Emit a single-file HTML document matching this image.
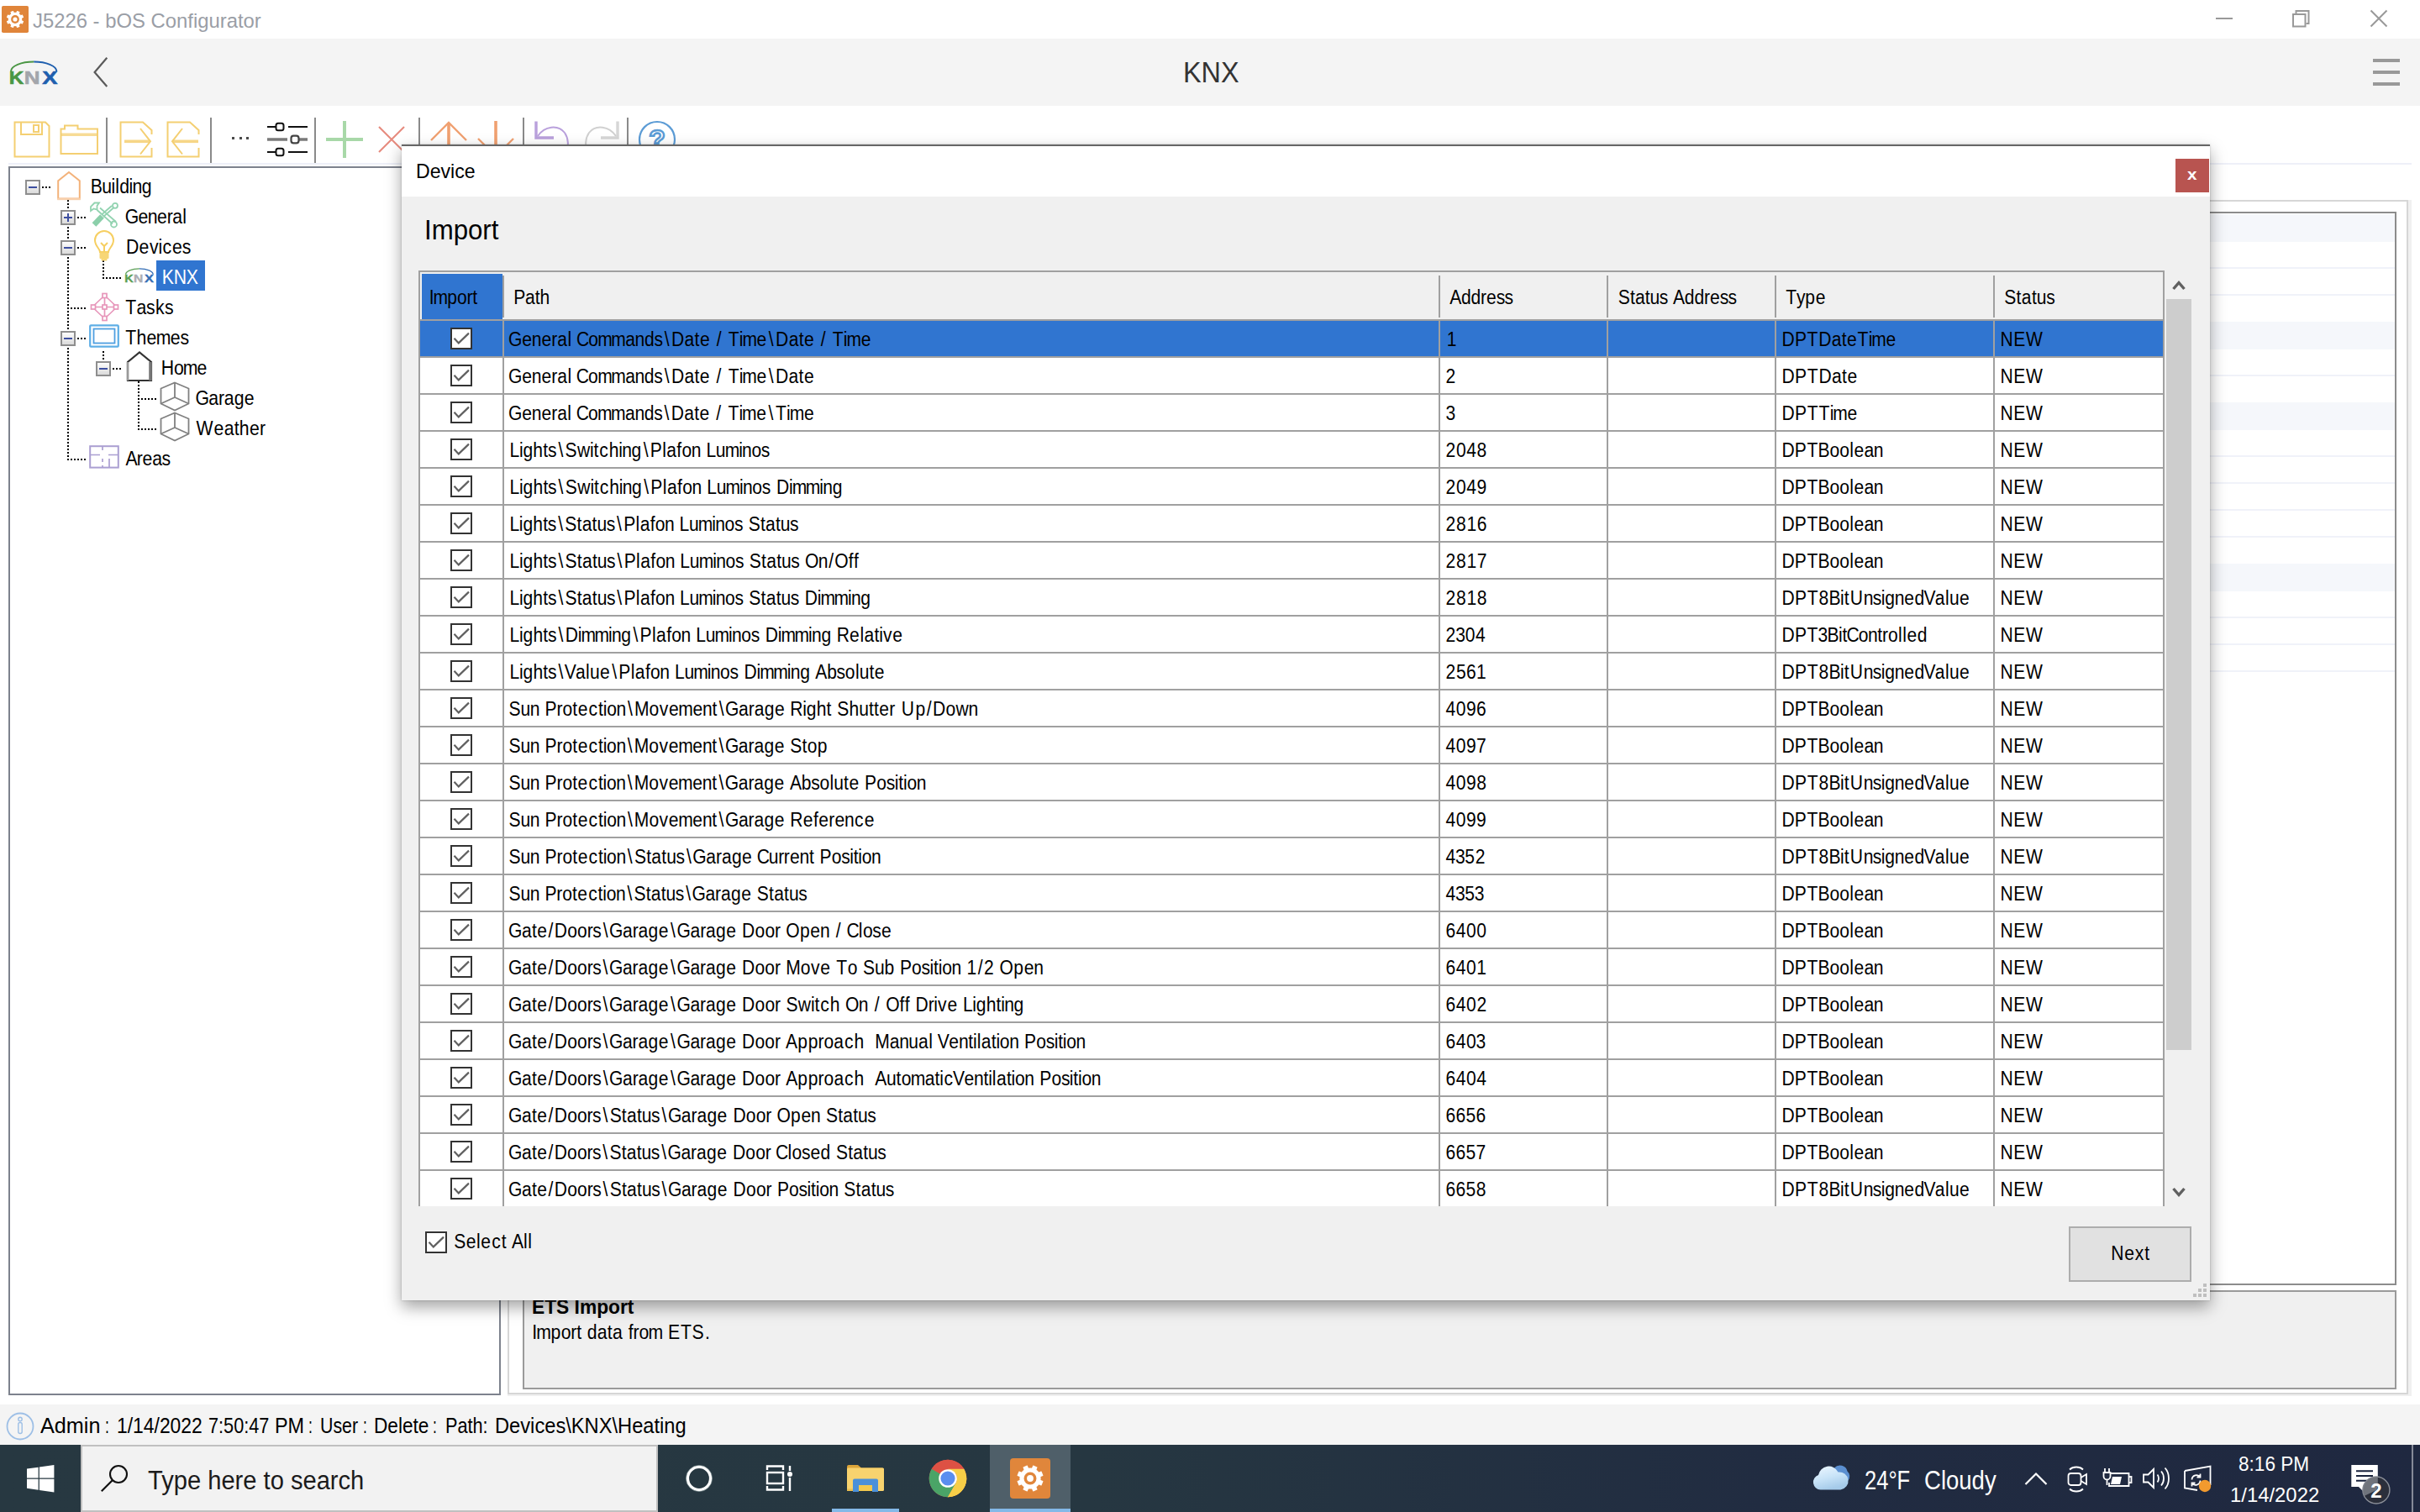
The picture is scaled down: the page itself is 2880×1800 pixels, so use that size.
<!DOCTYPE html>
<html lang="en"><head><meta charset="utf-8"><title>J5226 - bOS Configurator</title><style>
html,body{margin:0;padding:0;}
body{width:2880px;height:1800px;overflow:hidden;background:#fff;position:relative;font-family:"Liberation Sans",sans-serif;}
div,svg,span{position:absolute;}
svg{overflow:visible;}
.t{white-space:pre;transform-origin:0 0;}
.g text{white-space:pre;font-family:"Liberation Sans",sans-serif;}
.hd{height:2px;background:repeating-linear-gradient(90deg,#000 0,#000 2px,transparent 2px,transparent 4px);}
.vd{width:2px;background:repeating-linear-gradient(180deg,#000 0,#000 2px,transparent 2px,transparent 4px);}
.gl{background:repeating-linear-gradient(180deg,#a0a0a0 0,#a0a0a0 2px,transparent 2px,transparent 44px);}
</style></head><body>
<div style="left:0px;top:0px;width:2880px;height:46px;background:#fff;"></div>
<svg style="left:2px;top:7px;" width="32" height="32" viewBox="0 0 32 32"><rect x="0" y="0" width="32" height="32" rx="1.800" fill="#e0853a"/><rect x="14.10" y="5.74" width="3.80" height="4.75" rx="0.5" fill="#fff" transform="rotate(22.5 16 16)"/><rect x="14.10" y="5.74" width="3.80" height="4.75" rx="0.5" fill="#fff" transform="rotate(67.5 16 16)"/><rect x="14.10" y="5.74" width="3.80" height="4.75" rx="0.5" fill="#fff" transform="rotate(112.5 16 16)"/><rect x="14.10" y="5.74" width="3.80" height="4.75" rx="0.5" fill="#fff" transform="rotate(157.5 16 16)"/><rect x="14.10" y="5.74" width="3.80" height="4.75" rx="0.5" fill="#fff" transform="rotate(202.5 16 16)"/><rect x="14.10" y="5.74" width="3.80" height="4.75" rx="0.5" fill="#fff" transform="rotate(247.5 16 16)"/><rect x="14.10" y="5.74" width="3.80" height="4.75" rx="0.5" fill="#fff" transform="rotate(292.5 16 16)"/><rect x="14.10" y="5.74" width="3.80" height="4.75" rx="0.5" fill="#fff" transform="rotate(337.5 16 16)"/><circle cx="16" cy="16" r="8.27" fill="#fff"/><circle cx="16" cy="16" r="4.89" fill="#e0863b"/><circle cx="16" cy="16" r="2.57" fill="#fff"/></svg>
<span class="t" style="left:39.20px;top:12.76px;font-size:24.5px;line-height:24.5px;color:#9a9ea6;transform:scaleX(0.9736);">J5226 - bOS Configurator</span>
<div style="left:2637px;top:21px;width:20px;height:2px;background:#999;"></div>
<svg style="left:2726px;top:10px;" width="24" height="24" viewBox="0 0 24 24"><path d="M6.500 6.500V3h15v15h-3" fill="none" stroke="#999" stroke-width="2"/><rect x="3" y="7" width="14.500" height="14.500" fill="none" stroke="#999" stroke-width="2"/></svg>
<svg style="left:2819px;top:10px;" width="24" height="24" viewBox="0 0 24 24"><path d="M2.5 2.5L21.5 21.5M21.5 2.5L2.5 21.5" stroke="#999" stroke-width="2" fill="none"/></svg>
<div style="left:0px;top:46px;width:2880px;height:80px;background:#f4f4f4;"></div>
<svg style="left:12px;top:72px;" width="56.2" height="28" viewBox="0 0 56.200 28"><path d="M1 13A27.200 11.500 0 0 1 28.200 1.500" fill="none" stroke="#4a9644" stroke-width="2"/><path d="M28.200 1.500A27.200 11.500 0 0 1 55.400 13" fill="none" stroke="#1f5fae" stroke-width="2"/><text x="-1.200" y="27.900" font-family="Liberation Sans, sans-serif" font-weight="bold" font-size="21.800" lengthAdjust="spacingAndGlyphs" fill="#4a9644" stroke="#4a9644" stroke-width=".6" textLength="17.600">K</text><text x="16.800" y="27.900" font-family="Liberation Sans, sans-serif" font-weight="bold" font-size="21.800" lengthAdjust="spacingAndGlyphs" fill="#a3a5ab" stroke="#a3a5ab" stroke-width=".6" textLength="18.800">N</text><text x="38.200" y="27.900" font-family="Liberation Sans, sans-serif" font-weight="bold" font-size="21.800" lengthAdjust="spacingAndGlyphs" fill="#1f5fae" stroke="#1f5fae" stroke-width=".6" textLength="18.200">X</text></svg>
<svg style="left:108px;top:64px;" width="28" height="44" viewBox="0 0 28 44"><path d="M19.300 4.800L4.600 22L19.300 39" fill="none" stroke="#5a5a5a" stroke-width="2.200"/></svg>
<span class="t" style="left:1407.60px;top:68.37px;font-size:35px;line-height:35px;color:#333;transform:scaleX(0.9255);">KNX</span>
<div style="left:2824px;top:70px;width:32px;height:4px;background:#999;"></div>
<div style="left:2824px;top:84px;width:32px;height:4px;background:#999;"></div>
<div style="left:2824px;top:98px;width:32px;height:4px;background:#999;"></div>
<div style="left:0px;top:126px;width:2880px;height:72px;background:#fff;"></div>
<div style="left:10px;top:194px;width:2860px;height:2px;background:#eef0f8;"></div>
<svg style="left:14px;top:142px;" width="48" height="48" viewBox="0 0 48 48"><path d="M3.5 3.5H40L44.5 8V44.5H3.5Z" fill="none" stroke="#f4cf72" stroke-width="2"/><path d="M11 3.5V18H36V3.5" fill="none" stroke="#f4cf72" stroke-width="2"/><rect x="26" y="7" width="6" height="8" fill="none" stroke="#f4cf72" stroke-width="2"/></svg>
<svg style="left:68px;top:142px;" width="52" height="48" viewBox="0 0 52 48"><path d="M4.500 41V11.500H9V7.500H24.500V11.500H48V41Z" fill="none" stroke="#f4cf72" stroke-width="2"/><path d="M4.500 18.200H48" fill="none" stroke="#f4cf72" stroke-width="3.600" opacity=".75"/></svg>
<div style="left:126px;top:140px;width:2px;height:54px;background:#8a8a8a;"></div>
<svg style="left:140px;top:142px;" width="44" height="48" viewBox="0 0 44 48"><path d="M40.500 34V44.500H3.500V3.500H30L40.500 13V18" fill="none" stroke="#f4cf72" stroke-width="2"/><path d="M8 26.300H38" stroke="#f4cf72" stroke-width="3.600" fill="none" opacity=".85"/><path d="M27 11L39 26.300L27 41.500" stroke="#f4cf72" stroke-width="2" fill="none"/></svg>
<svg style="left:196px;top:142px;" width="44" height="48" viewBox="0 0 44 48"><path d="M40.500 34V44.500H3.500V3.500H30L40.500 13V18" fill="none" stroke="#f4cf72" stroke-width="2"/><path d="M9 26.300H40" stroke="#f4cf72" stroke-width="3.600" fill="none" opacity=".85"/><path d="M21 11L9 26.300L21 41.500" stroke="#f4cf72" stroke-width="2" fill="none"/></svg>
<div style="left:250px;top:140px;width:2px;height:54px;background:#8a8a8a;"></div>
<div style="left:276.2px;top:163px;width:3px;height:3px;background:#4a4a4a;"></div>
<div style="left:284.8px;top:163px;width:3px;height:3px;background:#4a4a4a;"></div>
<div style="left:293.4px;top:163px;width:3px;height:3px;background:#4a4a4a;"></div>
<svg style="left:316px;top:144px;" width="52" height="44" viewBox="0 0 52 44"><g stroke="#111" stroke-width="2" fill="#fff"><path d="M2 7H12M27 7H50M2 37H12M27 37H50"/><rect x="12.500" y="2.800" width="9" height="8.400" rx="2.500"/><rect x="12.500" y="32.800" width="9" height="8.400" rx="2.500"/></g><g stroke="#7a7a7a" fill="#fff"><path d="M2 22H26M39 22H50" stroke-width="3.600"/><rect x="30.500" y="17.600" width="9" height="8.800" rx="2.800" stroke="#444" stroke-width="2.200"/></g></svg>
<div style="left:374px;top:140px;width:2px;height:54px;background:#8a8a8a;"></div>
<div style="left:388px;top:164px;width:44px;height:4px;background:#a8d8a8;"></div>
<div style="left:408px;top:144px;width:4px;height:44px;background:#a8d8a8;"></div>
<svg style="left:448px;top:148px;" width="36" height="36" viewBox="0 0 36 36"><path d="M3 3L33 33M33 3L3 33" stroke="#e68b7e" stroke-width="2.100" fill="none"/></svg>
<div style="left:498px;top:140px;width:2px;height:54px;background:#8a8a8a;"></div>
<svg style="left:510px;top:142px;" width="48" height="48" viewBox="0 0 48 48"><path d="M24 4V46" stroke="#f0a070" stroke-width="3.6" fill="none"/><path d="M3 25L24 4L45 25" stroke="#f0a070" stroke-width="2.4" fill="none"/></svg>
<svg style="left:566px;top:142px;" width="48" height="48" viewBox="0 0 48 48"><path d="M24 2V44" stroke="#f0a070" stroke-width="3.6" fill="none"/><path d="M3 23L24 44L45 23" stroke="#f0a070" stroke-width="2.4" fill="none"/></svg>
<div style="left:622px;top:140px;width:2px;height:54px;background:#8a8a8a;"></div>
<svg style="left:634px;top:142px;" width="48" height="48" viewBox="0 0 48 48"><path d="M4 2.500V22H25" stroke="#b9a0dc" stroke-width="3.400" fill="none"/><path d="M6 20C14 8 30 6 38 16C43 23 43 32 40 44" stroke="#b9a0dc" stroke-width="2" fill="none"/></svg>
<svg style="left:692px;top:142px;" width="48" height="48" viewBox="0 0 48 48"><path d="M43 2.500V22H23" stroke="#d6d6d6" stroke-width="3.400" fill="none"/><path d="M41 20C33 8 17 6 9 16C4 23 4 32 7 44" stroke="#d0d0d0" stroke-width="2" fill="none"/></svg>
<div style="left:746px;top:140px;width:2px;height:54px;background:#8a8a8a;"></div>
<svg style="left:758px;top:142px;" width="48" height="48" viewBox="0 0 48 48"><circle cx="24" cy="24" r="21" fill="none" stroke="#5b9bd5" stroke-width="2.2"/><text x="24" y="35" text-anchor="middle" font-family="Liberation Sans, sans-serif" font-weight="bold" font-size="32" fill="none" stroke="#5b9bd5" stroke-width="2.400">?</text></svg>
<div style="left:10px;top:198px;width:586px;height:1463px;background:#fff;border:2px solid #7d828d;box-sizing:border-box;"></div>
<div class="vd" style="left:80px;top:238px;height:310px"></div>
<div class="hd" style="left:50px;top:222px;width:12px"></div>
<div class="hd" style="left:92px;top:258px;width:10px"></div>
<div class="hd" style="left:92px;top:294px;width:10px"></div>
<div class="hd" style="left:92px;top:402px;width:10px"></div>
<div class="hd" style="left:80px;top:366px;width:22px"></div>
<div class="hd" style="left:80px;top:546px;width:22px"></div>
<div class="vd" style="left:122px;top:310px;height:22px"></div>
<div class="hd" style="left:122px;top:330px;width:22px"></div>
<div class="vd" style="left:122px;top:418px;height:12px"></div>
<div class="hd" style="left:134px;top:438px;width:10px"></div>
<div class="vd" style="left:164px;top:454px;height:58px"></div>
<div class="hd" style="left:164px;top:474px;width:22px"></div>
<div class="hd" style="left:164px;top:510px;width:22px"></div>
<svg style="left:30px;top:214px;" width="18" height="18" viewBox="0 0 18 18"><defs><linearGradient id="eg" x1="0" y1="0" x2="0" y2="1"><stop offset="0" stop-color="#fff"/><stop offset="1" stop-color="#d8d8d8"/></linearGradient></defs><rect x="1" y="1" width="16" height="16" fill="url(#eg)" stroke="#8e8e8e" stroke-width="2"/><rect x="4" y="8" width="10" height="2" fill="#3d4fa0"/></svg>
<svg style="left:72px;top:250px;" width="18" height="18" viewBox="0 0 18 18"><rect x="1" y="1" width="16" height="16" fill="url(#eg)" stroke="#8e8e8e" stroke-width="2"/><rect x="4" y="8" width="10" height="2" fill="#3d4fa0"/><rect x="8" y="4" width="2" height="10" fill="#3d4fa0"/></svg>
<svg style="left:72px;top:286px;" width="18" height="18" viewBox="0 0 18 18"><rect x="1" y="1" width="16" height="16" fill="url(#eg)" stroke="#8e8e8e" stroke-width="2"/><rect x="4" y="8" width="10" height="2" fill="#3d4fa0"/></svg>
<svg style="left:72px;top:394px;" width="18" height="18" viewBox="0 0 18 18"><rect x="1" y="1" width="16" height="16" fill="url(#eg)" stroke="#8e8e8e" stroke-width="2"/><rect x="4" y="8" width="10" height="2" fill="#3d4fa0"/></svg>
<svg style="left:114px;top:430px;" width="18" height="18" viewBox="0 0 18 18"><rect x="1" y="1" width="16" height="16" fill="url(#eg)" stroke="#8e8e8e" stroke-width="2"/><rect x="4" y="8" width="10" height="2" fill="#3d4fa0"/></svg>
<svg style="left:66px;top:202px;" width="32" height="38" viewBox="0 0 32 38"><path d="M3.200 34.500V13.300L16 3L28.800 13.300V34.500Z" fill="none" stroke="#f3b27a" stroke-width="2"/><path d="M2.200 35H29.800" stroke="#f8d0ac" stroke-width="2.400"/></svg>
<svg style="left:106px;top:240px;" width="36" height="32" viewBox="0 0 36 32"><g stroke="#74c79b" fill="none" stroke-width="1.800" opacity=".78"><path d="M6.500 1.500H12L9.500 5V9.500L5.500 8.500L2 11V6Z"/><path d="M9.500 10L28 26.500M13 7.500L32 24"/><circle cx="29.500" cy="27" r="3.500"/><circle cx="31" cy="4.800" r="3"/><path d="M29 7.500L17 18M27 5L15.500 15"/><path d="M15.500 17.500L6 27.500" stroke-width="6.500" stroke="#6bc293"/></g></svg>
<svg style="left:110px;top:274px;" width="28" height="40" viewBox="0 0 28 40"><g fill="none" stroke="#f6cf62" stroke-width="2"><path d="M9 26C9 22 3 19 3 12A11 11 0 0 1 25 12C25 19 19 22 19 26Z"/><path d="M10 15L14 19L18 15M14 19V26"/></g><rect x="8.500" y="26.500" width="11" height="7.500" rx="1" fill="#f7d676"/><rect x="10.500" y="33.500" width="7" height="3" rx="1.200" fill="#f7d676"/></svg>
<svg style="left:148.5px;top:319.2px;opacity:0.9;" width="33.7" height="16.8" viewBox="0 0 56.200 28"><path d="M1 13A27.200 11.500 0 0 1 28.200 1.500" fill="none" stroke="#4a9644" stroke-width="2"/><path d="M28.200 1.500A27.200 11.500 0 0 1 55.400 13" fill="none" stroke="#1f5fae" stroke-width="2"/><text x="-1.200" y="27.900" font-family="Liberation Sans, sans-serif" font-weight="bold" font-size="21.800" lengthAdjust="spacingAndGlyphs" fill="#4a9644" stroke="#4a9644" stroke-width=".6" textLength="17.600">K</text><text x="16.800" y="27.900" font-family="Liberation Sans, sans-serif" font-weight="bold" font-size="21.800" lengthAdjust="spacingAndGlyphs" fill="#a3a5ab" stroke="#a3a5ab" stroke-width=".6" textLength="18.800">N</text><text x="38.200" y="27.900" font-family="Liberation Sans, sans-serif" font-weight="bold" font-size="21.800" lengthAdjust="spacingAndGlyphs" fill="#1f5fae" stroke="#1f5fae" stroke-width=".6" textLength="18.200">X</text></svg>
<svg style="left:107px;top:347.5px;" width="35" height="35" viewBox="0 0 35 35"><g fill="none" stroke="#e796ba" stroke-width="1.700"><rect x="15" y="1.500" width="5" height="5"/><rect x="15" y="28.500" width="5" height="5"/><rect x="1.500" y="15" width="5" height="5"/><rect x="28.500" y="15" width="5" height="5"/><rect x="15" y="15" width="5" height="5"/><path d="M17.500 6.500V15M17.500 20V28.500M6.500 17.500H15M20 17.500H28.500M15 6L5.500 15M20 6L29.500 15M5.500 20L15 29M29.500 20L20 29"/></g></svg>
<svg style="left:106px;top:386px;" width="36" height="28" viewBox="0 0 36 28"><rect x="1.200" y="1.300" width="33.600" height="25.400" fill="none" stroke="#5eaee6" stroke-width="2.200" rx="1"/><rect x="5.500" y="5.500" width="25" height="17" fill="none" stroke="#4f9fe0" stroke-width="1.800"/></svg>
<svg style="left:149px;top:417px;" width="34" height="38" viewBox="0 0 34 38"><path d="M3 36V14L17 2.500L31 14V36Z" fill="none" stroke="#333" stroke-width="2.2"/><path d="M30 14V36" stroke="#777" stroke-width="3.6"/><path d="M3 14V36" stroke="#999" stroke-width="2.5"/></svg>
<svg style="left:189.5px;top:453.5px;" width="36" height="36" viewBox="0 0 36 36"><g fill="none" stroke="#808080" stroke-width="1.8"><path d="M18 1.500L34.500 8.500V26.500L18 34.500L1.500 26.500V8.500Z"/><path d="M18 1.500V19M18 19L1.500 26.500M18 19L34.500 26.500"/></g></svg>
<svg style="left:189.5px;top:489.5px;" width="36" height="36" viewBox="0 0 36 36"><g fill="none" stroke="#808080" stroke-width="1.8"><path d="M18 1.500L34.500 8.500V26.500L18 34.500L1.500 26.500V8.500Z"/><path d="M18 1.500V19M18 19L1.500 26.500M18 19L34.500 26.500"/></g></svg>
<svg style="left:106px;top:530px;" width="36" height="28" viewBox="0 0 36 28"><g fill="none" stroke="#ab9fd2" stroke-width="2"><rect x="1.200" y="1.200" width="33.600" height="25.400"/><path d="M1.200 11.500H13M23 11.500H34.800M16 1.200V6M16 16V20M24 16V26.600M16 24V26.600" stroke-width="1.700"/></g></svg>
<div style="left:186px;top:310px;width:58px;height:36px;background:#3075d0;"></div>
<svg class="g" style="left:105px;top:206.10px" width="79" height="34"><text transform="scale(0.8700,1)" x="3.10 18.83 31.75 37.07 42.73 55.88 60.26 73.22" y="24.4" font-size="24.4" fill="#000" xml:space="preserve">Building</text></svg>
<svg class="g" style="left:146px;top:242.10px" width="80" height="34"><text transform="scale(0.8700,1)" x="3.22 21.33 34.28 47.22 60.57 68.23 81.94" y="24.4" font-size="24.4" fill="#000" xml:space="preserve">General</text></svg>
<svg class="g" style="left:148px;top:278.10px" width="83" height="34"><text transform="scale(0.8700,1)" x="2.30 20.24 34.39 46.50 52.31 65.56 78.95" y="24.4" font-size="24.4" fill="#000" xml:space="preserve">Devices</text></svg>
<svg class="g" style="left:190px;top:314.10px" width="50" height="34"><text transform="scale(0.8700,1)" x="3.22 19.24 36.60" y="24.4" font-size="24.4" fill="#fff" xml:space="preserve">KNX</text></svg>
<svg class="g" style="left:147px;top:350.10px" width="63" height="34"><text transform="scale(0.8700,1)" x="2.53 17.86 30.97 43.70 56.42" y="24.4" font-size="24.4" fill="#000" xml:space="preserve">Tasks</text></svg>
<svg class="g" style="left:147px;top:386.10px" width="82" height="34"><text transform="scale(0.8700,1)" x="2.53 17.85 31.69 44.49 64.06 77.46" y="24.4" font-size="24.4" fill="#000" xml:space="preserve">Themes</text></svg>
<svg class="g" style="left:189px;top:422.10px" width="61" height="34"><text transform="scale(0.8700,1)" x="3.10 20.76 33.04 52.41" y="24.4" font-size="24.4" fill="#000" xml:space="preserve">Home</text></svg>
<svg class="g" style="left:230px;top:458.10px" width="76" height="34"><text transform="scale(0.8700,1)" x="2.87 21.06 34.39 42.27 55.95 69.88" y="24.4" font-size="24.4" fill="#000" xml:space="preserve">Garage</text></svg>
<svg class="g" style="left:231px;top:494.10px" width="89" height="34"><text transform="scale(0.8700,1)" x="2.87 27.12 41.16 54.95 61.91 75.91 89.58" y="24.4" font-size="24.4" fill="#000" xml:space="preserve">Weather</text></svg>
<svg class="g" style="left:147px;top:530.10px" width="60" height="34"><text transform="scale(0.8700,1)" x="2.87 18.12 25.90 39.38 52.17" y="24.4" font-size="24.4" fill="#000" xml:space="preserve">Areas</text></svg>
<div style="left:2866px;top:238px;width:4px;height:1424px;background:#f0f0f0;"></div>
<div style="left:604px;top:1660px;width:2266px;height:2px;background:#f0f0f0;"></div>
<div style="left:604px;top:238px;width:2262px;height:1422px;background:#fff;border:2px solid #d6d6d6;box-sizing:border-box;"></div>
<div style="left:622px;top:252px;width:2230px;height:1278px;background:#fff;border:2px solid #8c8c8c;box-sizing:border-box;"></div>
<div style="left:624px;top:254.5px;width:2226px;height:33px;background:#f5f7fb;"></div>
<div style="left:624px;top:382.5px;width:2226px;height:33px;background:#f5f7fb;"></div>
<div style="left:624px;top:478.5px;width:2226px;height:33px;background:#f5f7fb;"></div>
<div style="left:624px;top:670.5px;width:2226px;height:33px;background:#f5f7fb;"></div>
<div style="left:624px;top:318px;width:2226px;height:2px;background:#f0f2f9;"></div>
<div style="left:624px;top:350px;width:2226px;height:2px;background:#f0f2f9;"></div>
<div style="left:624px;top:446px;width:2226px;height:2px;background:#f0f2f9;"></div>
<div style="left:624px;top:542px;width:2226px;height:2px;background:#f0f2f9;"></div>
<div style="left:624px;top:574px;width:2226px;height:2px;background:#f0f2f9;"></div>
<div style="left:624px;top:606px;width:2226px;height:2px;background:#f0f2f9;"></div>
<div style="left:624px;top:638px;width:2226px;height:2px;background:#f0f2f9;"></div>
<div style="left:624px;top:734px;width:2226px;height:2px;background:#f0f2f9;"></div>
<div style="left:624px;top:766px;width:2226px;height:2px;background:#f0f2f9;"></div>
<div style="left:624px;top:798px;width:2226px;height:2px;background:#f0f2f9;"></div>
<div style="left:622px;top:1536px;width:2230px;height:118px;background:#f0f0f0;border:2px solid #9a9a9a;box-sizing:border-box;"></div>
<span class="t" style="left:632.50px;top:1543.95px;font-size:24.4px;line-height:24.4px;color:#000;font-weight:bold;transform:scaleX(0.9335);">ETS Import</span>
<svg class="g" style="left:631px;top:1569.60px" width="217" height="34"><text transform="scale(0.8700,1)" x="2.53 8.36 28.17 42.15 55.52 63.52 70.80 78.01 91.77 105.61 112.66 126.74 134.10 140.84 148.76 161.48 181.29 188.65 205.70 221.25 238.96" y="24.4" font-size="24.4" fill="#000" xml:space="preserve">Import data from ETS.</text></svg>
<div style="left:478px;top:172px;width:2152px;height:1376px;background:#f0f0f0;box-shadow:0 8px 18px 0 rgba(0,0,0,.36),0 0 2px rgba(0,0,0,.22);"></div>
<div style="left:478px;top:172px;width:2152px;height:62px;background:#fff;"></div>
<div style="left:478px;top:172px;width:2152px;height:2px;background:#666;"></div>
<span class="t" style="left:494.70px;top:192.79px;font-size:23.4px;line-height:23.4px;color:#000;transform:scaleX(0.9883);">Device</span>
<div style="left:2589px;top:189px;width:40px;height:40px;background:#b85450;"></div>
<span class="t" style="left:2603.40px;top:198.22px;font-size:19px;line-height:19px;color:#fff;font-weight:bold;transform:scaleX(1.0886);">x</span>
<span class="t" style="left:505.20px;top:257.97px;font-size:32.4px;line-height:32.4px;color:#000;transform:scaleX(0.9627);">Import</span>
<div style="left:498px;top:322px;width:2078px;height:1114px;background:#fff;"></div>
<div style="left:498px;top:322px;width:2078px;height:58px;background:#f0f0f0;"></div>
<div style="left:502px;top:326px;width:96px;height:54px;background:#3075d0;"></div>
<div style="left:500px;top:382px;width:2074px;height:42px;background:#3075d0;"></div>
<div style="left:498px;top:322px;width:2078px;height:2px;background:#a0a0a0;"></div>
<div class="gl" style="left:500px;top:380px;width:2074px;height:1056px"></div>
<div style="left:498px;top:322px;width:2px;height:1114px;background:#a0a0a0;"></div>
<div style="left:2574px;top:322px;width:2px;height:1114px;background:#a0a0a0;"></div>
<div style="left:598px;top:328px;width:2px;height:50px;background:#a0a0a0;"></div>
<div style="left:598px;top:380px;width:2px;height:1056px;background:#a0a0a0;"></div>
<div style="left:1712px;top:328px;width:2px;height:50px;background:#a0a0a0;"></div>
<div style="left:1712px;top:380px;width:2px;height:1056px;background:#a0a0a0;"></div>
<div style="left:1912px;top:328px;width:2px;height:50px;background:#a0a0a0;"></div>
<div style="left:1912px;top:380px;width:2px;height:1056px;background:#a0a0a0;"></div>
<div style="left:2112px;top:328px;width:2px;height:50px;background:#a0a0a0;"></div>
<div style="left:2112px;top:380px;width:2px;height:1056px;background:#a0a0a0;"></div>
<div style="left:2372px;top:328px;width:2px;height:50px;background:#a0a0a0;"></div>
<div style="left:2372px;top:380px;width:2px;height:1056px;background:#a0a0a0;"></div>
<svg class="g" style="left:508px;top:338.40px" width="63" height="33"><text transform="scale(0.8700,1)" x="3.22 8.70 27.94 41.48 54.48 62.24" y="24.2" font-size="24.2" fill="#000" xml:space="preserve">Import</text></svg>
<svg class="g" style="left:609px;top:338.40px" width="49" height="33"><text transform="scale(0.8700,1)" x="2.53 18.49 31.94 38.61" y="24.2" font-size="24.2" fill="#000" xml:space="preserve">Path</text></svg>
<svg class="g" style="left:1723px;top:338.40px" width="81" height="33"><text transform="scale(0.8700,1)" x="2.53 18.31 31.72 44.87 52.95 66.30 77.56" y="24.2" font-size="24.2" fill="#000" xml:space="preserve">Address</text></svg>
<svg class="g" style="left:1923px;top:338.40px" width="148" height="33"><text transform="scale(0.8700,1)" x="3.22 19.46 26.36 39.99 46.58 59.40 71.43 78.18 94.00 107.45 120.63 128.74 142.12 153.42" y="24.2" font-size="24.2" fill="#000" xml:space="preserve">Status Address</text></svg>
<svg class="g" style="left:2123px;top:338.40px" width="53" height="33"><text transform="scale(0.8700,1)" x="2.53 17.27 29.13 43.33" y="24.2" font-size="24.2" fill="#000" xml:space="preserve">Type</text></svg>
<svg class="g" style="left:2383px;top:338.40px" width="66" height="33"><text transform="scale(0.8700,1)" x="2.53 19.06 26.22 40.11 46.95 60.08" y="24.2" font-size="24.2" fill="#000" xml:space="preserve">Status</text></svg>
<svg style="left:536px;top:390px;" width="26" height="26" viewBox="0 0 26 26"><rect x="1" y="1" width="24" height="24" fill="#fff" stroke="#333" stroke-width="2"/><path d="M4.500 12.800L9.800 18.400L22 6.600" fill="none" stroke="#606060" stroke-width="2.2"/></svg>
<svg class="g" style="left:603px;top:388.10px" width="437" height="33"><text transform="scale(0.8700,1)" x="2.41 20.97 34.31 47.65 61.30 69.29 83.26 89.36 95.29 111.67 124.35 142.81 162.29 175.38 188.38 201.59 215.86 225.33 243.21 256.98 264.26 278.53 286.98 295.42 303.13 318.17 322.36 342.09 358.48 367.95 385.82 399.59 406.87 421.14 429.59 438.04 445.74 460.78 464.97 484.71" y="24.2" font-size="24.2" fill="#000" xml:space="preserve">General Commands\Date / Time\Date / Time</text></svg>
<svg class="g" style="left:1719px;top:388.10px" width="18" height="33"><text transform="scale(0.8700,1)" x="3.22" y="24.2" font-size="24.2" fill="#000" xml:space="preserve">1</text></svg>
<svg class="g" style="left:2118px;top:388.10px" width="142" height="33"><text transform="scale(0.8700,1)" x="2.87 20.68 37.50 53.10 70.97 84.72 92.00 106.46 121.49 125.68 145.40" y="24.2" font-size="24.2" fill="#000" xml:space="preserve">DPTDateTime</text></svg>
<svg class="g" style="left:2378px;top:388.10px" width="56" height="33"><text transform="scale(0.8700,1)" x="2.87 20.93 37.96" y="24.2" font-size="24.2" fill="#000" xml:space="preserve">NEW</text></svg>
<svg style="left:536px;top:434px;" width="26" height="26" viewBox="0 0 26 26"><rect x="1" y="1" width="24" height="24" fill="#fff" stroke="#333" stroke-width="2"/><path d="M4.500 12.800L9.800 18.400L22 6.600" fill="none" stroke="#606060" stroke-width="2.2"/></svg>
<svg class="g" style="left:603px;top:432.10px" width="369" height="33"><text transform="scale(0.8700,1)" x="2.41 20.96 34.30 47.64 61.28 69.28 83.24 89.34 95.27 111.64 124.32 142.78 162.25 175.33 188.33 201.54 215.81 225.28 243.15 256.91 264.19 278.46 286.91 295.35 303.05 318.09 322.28 342.01 358.39 367.86 385.73 399.49 406.77" y="24.2" font-size="24.2" fill="#000" xml:space="preserve">General Commands\Date / Time\Date</text></svg>
<svg class="g" style="left:1718px;top:432.10px" width="18" height="33"><text transform="scale(0.8700,1)" x="2.99" y="24.2" font-size="24.2" fill="#000" xml:space="preserve">2</text></svg>
<svg class="g" style="left:2118px;top:432.10px" width="96" height="33"><text transform="scale(0.8700,1)" x="2.87 20.78 37.70 53.40 71.36 85.18 92.52" y="24.2" font-size="24.2" fill="#000" xml:space="preserve">DPTDate</text></svg>
<svg class="g" style="left:2378px;top:432.10px" width="56" height="33"><text transform="scale(0.8700,1)" x="2.87 20.93 37.96" y="24.2" font-size="24.2" fill="#000" xml:space="preserve">NEW</text></svg>
<svg style="left:536px;top:478px;" width="26" height="26" viewBox="0 0 26 26"><rect x="1" y="1" width="24" height="24" fill="#fff" stroke="#333" stroke-width="2"/><path d="M4.500 12.800L9.800 18.400L22 6.600" fill="none" stroke="#606060" stroke-width="2.2"/></svg>
<svg class="g" style="left:603px;top:476.10px" width="369" height="33"><text transform="scale(0.8700,1)" x="2.41 20.95 34.27 47.60 61.23 69.21 83.16 89.26 95.18 111.54 124.20 142.64 162.10 175.17 188.15 201.35 215.61 225.06 242.92 256.67 263.94 278.19 286.63 295.07 302.76 317.79 321.97 341.68 358.05 367.86 382.89 387.06 406.77" y="24.2" font-size="24.2" fill="#000" xml:space="preserve">General Commands\Date / Time\Time</text></svg>
<svg class="g" style="left:1718px;top:476.10px" width="18" height="33"><text transform="scale(0.8700,1)" x="2.99" y="24.2" font-size="24.2" fill="#000" xml:space="preserve">3</text></svg>
<svg class="g" style="left:2118px;top:476.10px" width="96" height="33"><text transform="scale(0.8700,1)" x="2.87 20.70 37.55 53.53 68.58 72.78 92.52" y="24.2" font-size="24.2" fill="#000" xml:space="preserve">DPTTime</text></svg>
<svg class="g" style="left:2378px;top:476.10px" width="56" height="33"><text transform="scale(0.8700,1)" x="2.87 20.93 37.96" y="24.2" font-size="24.2" fill="#000" xml:space="preserve">NEW</text></svg>
<svg style="left:536px;top:522px;" width="26" height="26" viewBox="0 0 26 26"><rect x="1" y="1" width="24" height="24" fill="#fff" stroke="#333" stroke-width="2"/><path d="M4.500 12.800L9.800 18.400L22 6.600" fill="none" stroke="#606060" stroke-width="2.2"/></svg>
<svg class="g" style="left:604px;top:520.10px" width="316" height="33"><text transform="scale(0.8700,1)" x="2.99 15.98 21.18 34.92 48.64 55.16 69.43 78.77 95.33 112.78 117.96 125.73 138.87 152.11 156.60 169.68 185.81 195.14 211.72 217.60 231.44 238.45 251.43 264.73 271.71 284.88 297.34 316.31 320.80 333.79 346.98" y="24.2" font-size="24.2" fill="#000" xml:space="preserve">Lights\Switching\Plafon Luminos</text></svg>
<svg class="g" style="left:1718px;top:520.10px" width="55" height="33"><text transform="scale(0.8700,1)" x="2.99 17.27 31.36 45.55" y="24.2" font-size="24.2" fill="#000" xml:space="preserve">2048</text></svg>
<svg class="g" style="left:2118px;top:520.10px" width="127" height="33"><text transform="scale(0.8700,1)" x="2.87 20.54 37.24 52.34 68.29 81.78 95.56 101.60 115.53 128.50" y="24.2" font-size="24.2" fill="#000" xml:space="preserve">DPTBoolean</text></svg>
<svg class="g" style="left:2378px;top:520.10px" width="56" height="33"><text transform="scale(0.8700,1)" x="2.87 20.93 37.96" y="24.2" font-size="24.2" fill="#000" xml:space="preserve">NEW</text></svg>
<svg style="left:536px;top:566px;" width="26" height="26" viewBox="0 0 26 26"><rect x="1" y="1" width="24" height="24" fill="#fff" stroke="#333" stroke-width="2"/><path d="M4.500 12.800L9.800 18.400L22 6.600" fill="none" stroke="#606060" stroke-width="2.2"/></svg>
<svg class="g" style="left:604px;top:564.10px" width="402" height="33"><text transform="scale(0.8700,1)" x="2.99 16.01 21.24 35.03 48.78 55.33 69.64 79.02 95.64 113.13 118.33 126.14 139.32 152.59 157.11 170.23 186.40 195.78 212.40 218.31 232.18 239.23 252.25 265.59 272.60 285.81 298.32 317.33 321.85 334.88 348.11 360.30 367.68 385.08 389.31 407.82 426.83 431.35 444.48" y="24.2" font-size="24.2" fill="#000" xml:space="preserve">Lights\Switching\Plafon Luminos Dimming</text></svg>
<svg class="g" style="left:1718px;top:564.10px" width="55" height="33"><text transform="scale(0.8700,1)" x="2.99 17.27 31.36 45.30" y="24.2" font-size="24.2" fill="#000" xml:space="preserve">2049</text></svg>
<svg class="g" style="left:2118px;top:564.10px" width="127" height="33"><text transform="scale(0.8700,1)" x="2.87 20.54 37.24 52.34 68.29 81.78 95.56 101.60 115.53 128.50" y="24.2" font-size="24.2" fill="#000" xml:space="preserve">DPTBoolean</text></svg>
<svg class="g" style="left:2378px;top:564.10px" width="56" height="33"><text transform="scale(0.8700,1)" x="2.87 20.93 37.96" y="24.2" font-size="24.2" fill="#000" xml:space="preserve">NEW</text></svg>
<svg style="left:536px;top:610px;" width="26" height="26" viewBox="0 0 26 26"><rect x="1" y="1" width="24" height="24" fill="#fff" stroke="#333" stroke-width="2"/><path d="M4.500 12.800L9.800 18.400L22 6.600" fill="none" stroke="#606060" stroke-width="2.2"/></svg>
<svg class="g" style="left:604px;top:608.10px" width="350" height="33"><text transform="scale(0.8700,1)" x="2.99 15.95 21.13 34.84 48.53 55.03 69.27 78.57 94.92 101.92 115.65 122.34 135.28 149.52 158.82 175.37 181.22 195.03 202.02 214.97 228.24 235.19 248.33 260.75 279.69 284.16 297.11 310.27 322.40 329.58 345.93 352.93 366.67 373.35 386.29" y="24.2" font-size="24.2" fill="#000" xml:space="preserve">Lights\Status\Plafon Luminos Status</text></svg>
<svg class="g" style="left:1718px;top:608.10px" width="55" height="33"><text transform="scale(0.8700,1)" x="2.99 17.37 31.59 45.58" y="24.2" font-size="24.2" fill="#000" xml:space="preserve">2816</text></svg>
<svg class="g" style="left:2118px;top:608.10px" width="127" height="33"><text transform="scale(0.8700,1)" x="2.87 20.54 37.24 52.34 68.29 81.78 95.56 101.60 115.53 128.50" y="24.2" font-size="24.2" fill="#000" xml:space="preserve">DPTBoolean</text></svg>
<svg class="g" style="left:2378px;top:608.10px" width="56" height="33"><text transform="scale(0.8700,1)" x="2.87 20.93 37.96" y="24.2" font-size="24.2" fill="#000" xml:space="preserve">NEW</text></svg>
<svg style="left:536px;top:654px;" width="26" height="26" viewBox="0 0 26 26"><rect x="1" y="1" width="24" height="24" fill="#fff" stroke="#333" stroke-width="2"/><path d="M4.500 12.800L9.800 18.400L22 6.600" fill="none" stroke="#606060" stroke-width="2.2"/></svg>
<svg class="g" style="left:604px;top:652.10px" width="421" height="33"><text transform="scale(0.8700,1)" x="2.99 15.99 21.20 34.96 48.69 55.22 69.51 78.86 95.26 102.29 116.07 122.79 135.78 150.06 159.41 176.00 181.89 195.75 202.77 215.77 229.08 236.07 249.26 261.73 280.72 285.22 298.22 311.43 323.59 330.82 347.22 354.25 368.03 374.75 387.74 399.90 406.91 425.11 439.37 447.34 466.29 473.45" y="24.2" font-size="24.2" fill="#000" xml:space="preserve">Lights\Status\Plafon Luminos Status On/Off</text></svg>
<svg class="g" style="left:1718px;top:652.10px" width="55" height="33"><text transform="scale(0.8700,1)" x="2.99 17.37 31.59 45.58" y="24.2" font-size="24.2" fill="#000" xml:space="preserve">2817</text></svg>
<svg class="g" style="left:2118px;top:652.10px" width="127" height="33"><text transform="scale(0.8700,1)" x="2.87 20.54 37.24 52.34 68.29 81.78 95.56 101.60 115.53 128.50" y="24.2" font-size="24.2" fill="#000" xml:space="preserve">DPTBoolean</text></svg>
<svg class="g" style="left:2378px;top:652.10px" width="56" height="33"><text transform="scale(0.8700,1)" x="2.87 20.93 37.96" y="24.2" font-size="24.2" fill="#000" xml:space="preserve">NEW</text></svg>
<svg style="left:536px;top:698px;" width="26" height="26" viewBox="0 0 26 26"><rect x="1" y="1" width="24" height="24" fill="#fff" stroke="#333" stroke-width="2"/><path d="M4.500 12.800L9.800 18.400L22 6.600" fill="none" stroke="#606060" stroke-width="2.2"/></svg>
<svg class="g" style="left:604px;top:696.10px" width="436" height="33"><text transform="scale(0.8700,1)" x="2.99 15.97 21.17 34.91 48.62 55.14 69.41 78.73 95.11 102.13 115.88 122.59 135.56 149.82 159.15 175.72 181.59 195.43 202.44 215.42 228.71 235.68 248.85 261.30 280.26 284.75 297.73 310.92 323.07 330.27 346.65 353.67 367.42 374.13 387.10 399.24 406.58 423.94 428.12 446.57 465.53 470.02 483.10" y="24.2" font-size="24.2" fill="#000" xml:space="preserve">Lights\Status\Plafon Luminos Status Dimming</text></svg>
<svg class="g" style="left:1718px;top:696.10px" width="55" height="33"><text transform="scale(0.8700,1)" x="2.99 17.37 31.59 45.82" y="24.2" font-size="24.2" fill="#000" xml:space="preserve">2818</text></svg>
<svg class="g" style="left:2118px;top:696.10px" width="229" height="33"><text transform="scale(0.8700,1)" x="2.87 20.74 37.63 53.44 67.19 82.90 88.10 96.37 114.73 127.35 138.80 144.04 157.17 170.55 184.55 197.14 212.49 226.49 232.08 245.86" y="24.2" font-size="24.2" fill="#000" xml:space="preserve">DPT8BitUnsignedValue</text></svg>
<svg class="g" style="left:2378px;top:696.10px" width="56" height="33"><text transform="scale(0.8700,1)" x="2.87 20.93 37.96" y="24.2" font-size="24.2" fill="#000" xml:space="preserve">NEW</text></svg>
<svg style="left:536px;top:742px;" width="26" height="26" viewBox="0 0 26 26"><rect x="1" y="1" width="24" height="24" fill="#fff" stroke="#333" stroke-width="2"/><path d="M4.500 12.800L9.800 18.400L22 6.600" fill="none" stroke="#606060" stroke-width="2.2"/></svg>
<svg class="g" style="left:604px;top:740.10px" width="474" height="33"><text transform="scale(0.8700,1)" x="2.99 15.98 21.20 34.95 48.68 55.21 69.50 78.97 96.35 100.55 119.02 138.00 142.50 155.60 171.74 181.09 197.68 203.56 217.41 224.43 237.43 250.74 257.73 270.91 283.38 302.36 306.87 319.86 333.07 345.23 352.58 369.96 374.16 392.63 411.61 416.12 429.21 443.23 450.18 467.92 482.14 488.03 501.80 508.33 513.81 526.77" y="24.2" font-size="24.2" fill="#000" xml:space="preserve">Lights\Dimming\Plafon Luminos Dimming Relative</text></svg>
<svg class="g" style="left:1718px;top:740.10px" width="53" height="33"><text transform="scale(0.8700,1)" x="2.99 16.33 29.48 43.57" y="24.2" font-size="24.2" fill="#000" xml:space="preserve">2304</text></svg>
<svg class="g" style="left:2118px;top:740.10px" width="179" height="33"><text transform="scale(0.8700,1)" x="2.87 20.66 37.48 52.18 64.84 80.50 85.67 91.34 107.69 120.66 133.70 140.32 148.20 162.05 168.09 174.21 188.15" y="24.2" font-size="24.2" fill="#000" xml:space="preserve">DPT3BitControlled</text></svg>
<svg class="g" style="left:2378px;top:740.10px" width="56" height="33"><text transform="scale(0.8700,1)" x="2.87 20.93 37.96" y="24.2" font-size="24.2" fill="#000" xml:space="preserve">NEW</text></svg>
<svg style="left:536px;top:786px;" width="26" height="26" viewBox="0 0 26 26"><rect x="1" y="1" width="24" height="24" fill="#fff" stroke="#333" stroke-width="2"/><path d="M4.500 12.800L9.800 18.400L22 6.600" fill="none" stroke="#606060" stroke-width="2.2"/></svg>
<svg class="g" style="left:604px;top:784.10px" width="452" height="33"><text transform="scale(0.8700,1)" x="2.99 15.98 21.20 34.95 48.68 55.21 69.50 77.74 93.06 107.03 112.60 126.34 142.73 152.08 168.67 174.55 188.41 195.43 208.42 221.73 228.72 241.90 254.37 273.35 277.86 290.86 304.06 316.22 323.57 340.95 345.15 363.62 382.60 387.11 400.20 414.22 421.12 436.97 450.03 461.88 475.75 481.32 494.77 502.06" y="24.2" font-size="24.2" fill="#000" xml:space="preserve">Lights\Value\Plafon Luminos Dimming Absolute</text></svg>
<svg class="g" style="left:1718px;top:784.10px" width="54" height="33"><text transform="scale(0.8700,1)" x="2.99 17.12 30.91 44.89" y="24.2" font-size="24.2" fill="#000" xml:space="preserve">2561</text></svg>
<svg class="g" style="left:2118px;top:784.10px" width="229" height="33"><text transform="scale(0.8700,1)" x="2.87 20.74 37.63 53.44 67.19 82.90 88.10 96.37 114.73 127.35 138.80 144.04 157.17 170.55 184.55 197.14 212.49 226.49 232.08 245.86" y="24.2" font-size="24.2" fill="#000" xml:space="preserve">DPT8BitUnsignedValue</text></svg>
<svg class="g" style="left:2378px;top:784.10px" width="56" height="33"><text transform="scale(0.8700,1)" x="2.87 20.93 37.96" y="24.2" font-size="24.2" fill="#000" xml:space="preserve">NEW</text></svg>
<svg style="left:536px;top:830px;" width="26" height="26" viewBox="0 0 26 26"><rect x="1" y="1" width="24" height="24" fill="#fff" stroke="#333" stroke-width="2"/><path d="M4.500 12.800L9.800 18.400L22 6.600" fill="none" stroke="#606060" stroke-width="2.2"/></svg>
<svg class="g" style="left:603px;top:828.10px" width="565" height="33"><text transform="scale(0.8700,1)" x="2.99 19.11 31.89 45.21 52.44 68.47 76.38 90.07 97.36 112.18 125.35 131.88 137.01 150.01 165.46 174.63 194.80 208.79 221.76 234.82 254.57 267.93 280.99 290.38 298.94 317.26 330.67 338.67 352.49 366.55 380.83 387.79 404.78 410.00 423.76 437.50 444.75 451.99 468.37 481.82 495.28 502.29 509.59 523.25 531.48 539.97 559.24 574.45 582.77 600.57 614.44 631.72" y="24.2" font-size="24.2" fill="#000" xml:space="preserve">Sun Protection\Movement\Garage Right Shutter Up/Down</text></svg>
<svg class="g" style="left:1718px;top:828.10px" width="54" height="33"><text transform="scale(0.8700,1)" x="2.99 17.08 31.02 44.81" y="24.2" font-size="24.2" fill="#000" xml:space="preserve">4096</text></svg>
<svg class="g" style="left:2118px;top:828.10px" width="127" height="33"><text transform="scale(0.8700,1)" x="2.87 20.54 37.24 52.34 68.29 81.78 95.56 101.60 115.53 128.50" y="24.2" font-size="24.2" fill="#000" xml:space="preserve">DPTBoolean</text></svg>
<svg class="g" style="left:2378px;top:828.10px" width="56" height="33"><text transform="scale(0.8700,1)" x="2.87 20.93 37.96" y="24.2" font-size="24.2" fill="#000" xml:space="preserve">NEW</text></svg>
<svg style="left:536px;top:874px;" width="26" height="26" viewBox="0 0 26 26"><rect x="1" y="1" width="24" height="24" fill="#fff" stroke="#333" stroke-width="2"/><path d="M4.500 12.800L9.800 18.400L22 6.600" fill="none" stroke="#606060" stroke-width="2.2"/></svg>
<svg class="g" style="left:603px;top:872.10px" width="385" height="33"><text transform="scale(0.8700,1)" x="2.99 19.10 31.87 45.18 52.40 68.43 76.33 90.01 97.29 112.10 125.26 131.79 136.91 149.91 165.34 174.50 194.66 208.64 221.60 234.64 254.38 267.73 280.79 290.17 298.72 317.02 330.43 338.43 352.23 366.28 380.56 387.78 404.17 411.11 425.05" y="24.2" font-size="24.2" fill="#000" xml:space="preserve">Sun Protection\Movement\Garage Stop</text></svg>
<svg class="g" style="left:1718px;top:872.10px" width="54" height="33"><text transform="scale(0.8700,1)" x="2.99 17.08 31.02 44.81" y="24.2" font-size="24.2" fill="#000" xml:space="preserve">4097</text></svg>
<svg class="g" style="left:2118px;top:872.10px" width="127" height="33"><text transform="scale(0.8700,1)" x="2.87 20.54 37.24 52.34 68.29 81.78 95.56 101.60 115.53 128.50" y="24.2" font-size="24.2" fill="#000" xml:space="preserve">DPTBoolean</text></svg>
<svg class="g" style="left:2378px;top:872.10px" width="56" height="33"><text transform="scale(0.8700,1)" x="2.87 20.93 37.96" y="24.2" font-size="24.2" fill="#000" xml:space="preserve">NEW</text></svg>
<svg style="left:536px;top:918px;" width="26" height="26" viewBox="0 0 26 26"><rect x="1" y="1" width="24" height="24" fill="#fff" stroke="#333" stroke-width="2"/><path d="M4.500 12.800L9.800 18.400L22 6.600" fill="none" stroke="#606060" stroke-width="2.2"/></svg>
<svg class="g" style="left:603px;top:916.10px" width="503" height="33"><text transform="scale(0.8700,1)" x="2.99 19.09 31.87 45.17 52.39 68.41 76.31 89.99 97.27 112.08 125.24 131.76 136.88 149.87 165.30 174.46 194.62 208.59 221.56 234.59 254.33 267.67 280.73 290.11 298.65 316.96 330.35 338.35 352.15 366.21 380.48 387.37 403.22 416.27 428.12 441.99 447.56 461.01 468.30 482.57 489.79 506.11 519.31 530.75 535.93 542.46 547.57 560.57" y="24.2" font-size="24.2" fill="#000" xml:space="preserve">Sun Protection\Movement\Garage Absolute Position</text></svg>
<svg class="g" style="left:1718px;top:916.10px" width="54" height="33"><text transform="scale(0.8700,1)" x="2.99 17.08 31.02 45.06" y="24.2" font-size="24.2" fill="#000" xml:space="preserve">4098</text></svg>
<svg class="g" style="left:2118px;top:916.10px" width="229" height="33"><text transform="scale(0.8700,1)" x="2.87 20.74 37.63 53.44 67.19 82.90 88.10 96.37 114.73 127.35 138.80 144.04 157.17 170.55 184.55 197.14 212.49 226.49 232.08 245.86" y="24.2" font-size="24.2" fill="#000" xml:space="preserve">DPT8BitUnsignedValue</text></svg>
<svg class="g" style="left:2378px;top:916.10px" width="56" height="33"><text transform="scale(0.8700,1)" x="2.87 20.93 37.96" y="24.2" font-size="24.2" fill="#000" xml:space="preserve">NEW</text></svg>
<svg style="left:536px;top:962px;" width="26" height="26" viewBox="0 0 26 26"><rect x="1" y="1" width="24" height="24" fill="#fff" stroke="#333" stroke-width="2"/><path d="M4.500 12.800L9.800 18.400L22 6.600" fill="none" stroke="#606060" stroke-width="2.2"/></svg>
<svg class="g" style="left:603px;top:960.10px" width="441" height="33"><text transform="scale(0.8700,1)" x="2.99 19.10 31.88 45.19 52.42 68.44 76.35 90.03 97.32 112.13 125.30 131.83 136.95 149.95 165.39 174.56 194.72 208.70 221.67 234.72 254.46 267.81 280.88 290.26 298.81 317.12 330.53 338.53 352.34 366.40 380.68 387.63 405.37 419.48 426.85 440.51 448.77 462.12 475.97 489.42" y="24.2" font-size="24.2" fill="#000" xml:space="preserve">Sun Protection\Movement\Garage Reference</text></svg>
<svg class="g" style="left:1718px;top:960.10px" width="54" height="33"><text transform="scale(0.8700,1)" x="2.99 17.08 31.02 44.81" y="24.2" font-size="24.2" fill="#000" xml:space="preserve">4099</text></svg>
<svg class="g" style="left:2118px;top:960.10px" width="127" height="33"><text transform="scale(0.8700,1)" x="2.87 20.54 37.24 52.34 68.29 81.78 95.56 101.60 115.53 128.50" y="24.2" font-size="24.2" fill="#000" xml:space="preserve">DPTBoolean</text></svg>
<svg class="g" style="left:2378px;top:960.10px" width="56" height="33"><text transform="scale(0.8700,1)" x="2.87 20.93 37.96" y="24.2" font-size="24.2" fill="#000" xml:space="preserve">NEW</text></svg>
<svg style="left:536px;top:1006px;" width="26" height="26" viewBox="0 0 26 26"><rect x="1" y="1" width="24" height="24" fill="#fff" stroke="#333" stroke-width="2"/><path d="M4.500 12.800L9.800 18.400L22 6.600" fill="none" stroke="#606060" stroke-width="2.2"/></svg>
<svg class="g" style="left:603px;top:1004.10px" width="449" height="33"><text transform="scale(0.8700,1)" x="2.99 19.10 31.87 45.18 52.40 68.42 76.33 90.00 97.29 112.10 125.26 131.79 136.90 149.90 165.33 174.68 191.07 198.11 211.88 218.59 231.58 245.86 254.41 272.72 286.12 294.12 307.92 321.98 336.25 342.19 358.35 371.43 379.03 387.29 400.63 413.69 420.94 428.17 444.49 457.70 469.13 474.32 480.84 485.96 498.96" y="24.2" font-size="24.2" fill="#000" xml:space="preserve">Sun Protection\Status\Garage Current Position</text></svg>
<svg class="g" style="left:1718px;top:1004.10px" width="53" height="33"><text transform="scale(0.8700,1)" x="2.99 16.14 29.14 43.27" y="24.2" font-size="24.2" fill="#000" xml:space="preserve">4352</text></svg>
<svg class="g" style="left:2118px;top:1004.10px" width="229" height="33"><text transform="scale(0.8700,1)" x="2.87 20.74 37.63 53.44 67.19 82.90 88.10 96.37 114.73 127.35 138.80 144.04 157.17 170.55 184.55 197.14 212.49 226.49 232.08 245.86" y="24.2" font-size="24.2" fill="#000" xml:space="preserve">DPT8BitUnsignedValue</text></svg>
<svg class="g" style="left:2378px;top:1004.10px" width="56" height="33"><text transform="scale(0.8700,1)" x="2.87 20.93 37.96" y="24.2" font-size="24.2" fill="#000" xml:space="preserve">NEW</text></svg>
<svg style="left:536px;top:1050px;" width="26" height="26" viewBox="0 0 26 26"><rect x="1" y="1" width="24" height="24" fill="#fff" stroke="#333" stroke-width="2"/><path d="M4.500 12.800L9.800 18.400L22 6.600" fill="none" stroke="#606060" stroke-width="2.2"/></svg>
<svg class="g" style="left:603px;top:1048.10px" width="361" height="33"><text transform="scale(0.8700,1)" x="2.99 19.05 31.78 45.05 52.24 68.22 76.09 89.73 96.98 111.74 124.86 131.37 136.46 149.41 164.81 174.10 190.46 197.46 211.19 217.88 230.82 245.06 253.56 271.82 285.18 293.15 306.91 320.91 335.15 342.33 358.69 365.69 379.42 386.11 399.05" y="24.2" font-size="24.2" fill="#000" xml:space="preserve">Sun Protection\Status\Garage Status</text></svg>
<svg class="g" style="left:1718px;top:1048.10px" width="52" height="33"><text transform="scale(0.8700,1)" x="2.99 16.14 29.14 42.15" y="24.2" font-size="24.2" fill="#000" xml:space="preserve">4353</text></svg>
<svg class="g" style="left:2118px;top:1048.10px" width="127" height="33"><text transform="scale(0.8700,1)" x="2.87 20.54 37.24 52.34 68.29 81.78 95.56 101.60 115.53 128.50" y="24.2" font-size="24.2" fill="#000" xml:space="preserve">DPTBoolean</text></svg>
<svg class="g" style="left:2378px;top:1048.10px" width="56" height="33"><text transform="scale(0.8700,1)" x="2.87 20.93 37.96" y="24.2" font-size="24.2" fill="#000" xml:space="preserve">NEW</text></svg>
<svg style="left:536px;top:1094px;" width="26" height="26" viewBox="0 0 26 26"><rect x="1" y="1" width="24" height="24" fill="#fff" stroke="#333" stroke-width="2"/><path d="M4.500 12.800L9.800 18.400L22 6.600" fill="none" stroke="#606060" stroke-width="2.2"/></svg>
<svg class="g" style="left:603px;top:1092.10px" width="461" height="33"><text transform="scale(0.8700,1)" x="2.41 20.72 34.49 41.77 57.00 65.30 83.09 96.69 110.00 117.49 131.77 140.32 158.63 172.02 180.02 193.82 207.87 224.27 232.81 251.12 264.52 272.51 286.31 300.37 314.64 321.98 339.77 353.38 366.68 374.90 381.91 401.03 415.31 428.66 441.97 450.42 458.87 464.81 481.45 487.24 500.44 512.64" y="24.2" font-size="24.2" fill="#000" xml:space="preserve">Gate/Doors\Garage\Garage Door Open / Close</text></svg>
<svg class="g" style="left:1718px;top:1092.10px" width="54" height="33"><text transform="scale(0.8700,1)" x="2.99 16.93 31.02 45.11" y="24.2" font-size="24.2" fill="#000" xml:space="preserve">6400</text></svg>
<svg class="g" style="left:2118px;top:1092.10px" width="127" height="33"><text transform="scale(0.8700,1)" x="2.87 20.54 37.24 52.34 68.29 81.78 95.56 101.60 115.53 128.50" y="24.2" font-size="24.2" fill="#000" xml:space="preserve">DPTBoolean</text></svg>
<svg class="g" style="left:2378px;top:1092.10px" width="56" height="33"><text transform="scale(0.8700,1)" x="2.87 20.93 37.96" y="24.2" font-size="24.2" fill="#000" xml:space="preserve">NEW</text></svg>
<svg style="left:536px;top:1138px;" width="26" height="26" viewBox="0 0 26 26"><rect x="1" y="1" width="24" height="24" fill="#fff" stroke="#333" stroke-width="2"/><path d="M4.500 12.800L9.800 18.400L22 6.600" fill="none" stroke="#606060" stroke-width="2.2"/></svg>
<svg class="g" style="left:603px;top:1136.10px" width="643" height="33"><text transform="scale(0.8700,1)" x="2.41 20.72 34.48 41.77 56.99 65.28 83.07 96.67 109.97 117.47 131.74 140.29 158.59 171.98 179.98 193.77 207.82 224.21 232.76 251.06 264.45 272.45 286.24 300.29 314.56 321.91 339.69 353.29 366.59 374.81 381.84 401.99 415.96 428.92 443.19 450.89 466.34 480.26 487.48 503.58 516.81 530.58 537.79 554.11 567.31 578.75 583.93 590.45 595.56 608.56 621.86 629.30 644.42 652.96 667.28 674.29 693.41 707.69 721.03" y="24.2" font-size="24.2" fill="#000" xml:space="preserve">Gate/Doors\Garage\Garage Door Move To Sub Position 1/2 Open</text></svg>
<svg class="g" style="left:1718px;top:1136.10px" width="54" height="33"><text transform="scale(0.8700,1)" x="2.99 16.93 31.02 45.15" y="24.2" font-size="24.2" fill="#000" xml:space="preserve">6401</text></svg>
<svg class="g" style="left:2118px;top:1136.10px" width="127" height="33"><text transform="scale(0.8700,1)" x="2.87 20.54 37.24 52.34 68.29 81.78 95.56 101.60 115.53 128.50" y="24.2" font-size="24.2" fill="#000" xml:space="preserve">DPTBoolean</text></svg>
<svg class="g" style="left:2378px;top:1136.10px" width="56" height="33"><text transform="scale(0.8700,1)" x="2.87 20.93 37.96" y="24.2" font-size="24.2" fill="#000" xml:space="preserve">NEW</text></svg>
<svg style="left:536px;top:1182px;" width="26" height="26" viewBox="0 0 26 26"><rect x="1" y="1" width="24" height="24" fill="#fff" stroke="#333" stroke-width="2"/><path d="M4.500 12.800L9.800 18.400L22 6.600" fill="none" stroke="#606060" stroke-width="2.2"/></svg>
<svg class="g" style="left:603px;top:1180.10px" width="619" height="33"><text transform="scale(0.8700,1)" x="2.41 20.72 34.48 41.77 56.99 65.29 83.07 96.68 109.98 117.48 131.75 140.30 158.60 172.00 179.99 193.79 207.84 224.23 232.78 251.08 264.48 272.47 286.27 300.32 314.59 321.93 339.72 353.32 366.63 374.84 382.06 398.63 416.09 421.27 429.05 442.19 456.16 463.17 481.35 494.66 503.11 511.56 518.56 537.50 544.66 551.99 559.34 576.82 584.31 589.79 602.75 617.02 624.00 636.99 642.20 655.95 669.67 676.20 680.70 693.79" y="24.2" font-size="24.2" fill="#000" xml:space="preserve">Gate/Doors\Garage\Garage Door Switch On / Off Drive Lighting</text></svg>
<svg class="g" style="left:1718px;top:1180.10px" width="55" height="33"><text transform="scale(0.8700,1)" x="2.99 16.93 31.02 45.30" y="24.2" font-size="24.2" fill="#000" xml:space="preserve">6402</text></svg>
<svg class="g" style="left:2118px;top:1180.10px" width="127" height="33"><text transform="scale(0.8700,1)" x="2.87 20.54 37.24 52.34 68.29 81.78 95.56 101.60 115.53 128.50" y="24.2" font-size="24.2" fill="#000" xml:space="preserve">DPTBoolean</text></svg>
<svg class="g" style="left:2378px;top:1180.10px" width="56" height="33"><text transform="scale(0.8700,1)" x="2.87 20.93 37.96" y="24.2" font-size="24.2" fill="#000" xml:space="preserve">NEW</text></svg>
<svg style="left:536px;top:1226px;" width="26" height="26" viewBox="0 0 26 26"><rect x="1" y="1" width="24" height="24" fill="#fff" stroke="#333" stroke-width="2"/><path d="M4.500 12.800L9.800 18.400L22 6.600" fill="none" stroke="#606060" stroke-width="2.2"/></svg>
<svg class="g" style="left:603px;top:1224.10px" width="693" height="33"><text transform="scale(0.8700,1)" x="2.41 20.71 34.48 41.76 56.98 65.28 83.06 96.67 109.97 117.46 131.74 140.28 158.58 171.97 179.97 193.76 207.81 224.20 232.74 251.04 264.44 272.43 286.23 300.28 314.54 321.89 339.67 353.28 366.57 374.79 381.68 398.00 412.26 425.89 433.79 447.49 462.03 475.17 489.14 496.63 503.67 523.91 537.00 549.77 563.25 577.21 583.31 589.42 604.99 618.33 631.39 637.91 643.29 649.17 662.94 669.46 674.57 687.56 700.87 708.08 724.40 737.60 749.04 754.21 760.74 765.85 778.84" y="24.2" font-size="24.2" fill="#000" xml:space="preserve">Gate/Doors\Garage\Garage Door Approach  Manual Ventilation Position</text></svg>
<svg class="g" style="left:1718px;top:1224.10px" width="54" height="33"><text transform="scale(0.8700,1)" x="2.99 16.93 31.02 44.17" y="24.2" font-size="24.2" fill="#000" xml:space="preserve">6403</text></svg>
<svg class="g" style="left:2118px;top:1224.10px" width="127" height="33"><text transform="scale(0.8700,1)" x="2.87 20.54 37.24 52.34 68.29 81.78 95.56 101.60 115.53 128.50" y="24.2" font-size="24.2" fill="#000" xml:space="preserve">DPTBoolean</text></svg>
<svg class="g" style="left:2378px;top:1224.10px" width="56" height="33"><text transform="scale(0.8700,1)" x="2.87 20.93 37.96" y="24.2" font-size="24.2" fill="#000" xml:space="preserve">NEW</text></svg>
<svg style="left:536px;top:1270px;" width="26" height="26" viewBox="0 0 26 26"><rect x="1" y="1" width="24" height="24" fill="#fff" stroke="#333" stroke-width="2"/><path d="M4.500 12.800L9.800 18.400L22 6.600" fill="none" stroke="#606060" stroke-width="2.2"/></svg>
<svg class="g" style="left:603px;top:1268.10px" width="711" height="33"><text transform="scale(0.8700,1)" x="2.41 20.72 34.49 41.77 57.00 65.30 83.08 96.69 109.99 117.49 131.77 140.32 158.62 172.02 180.02 193.82 207.87 224.26 232.81 251.11 264.51 272.51 286.31 300.36 314.63 321.98 339.77 353.37 366.68 374.89 381.79 398.12 412.38 426.01 433.91 447.61 462.16 475.31 489.27 496.77 503.67 519.45 532.90 539.84 552.53 572.01 585.78 592.30 598.27 610.29 625.86 639.20 652.26 658.79 664.17 670.05 683.82 690.35 695.46 708.46 721.77 728.98 745.31 758.51 769.95 775.13 781.65 786.77 799.76" y="24.2" font-size="24.2" fill="#000" xml:space="preserve">Gate/Doors\Garage\Garage Door Approach  AutomaticVentilation Position</text></svg>
<svg class="g" style="left:1718px;top:1268.10px" width="54" height="33"><text transform="scale(0.8700,1)" x="2.99 16.93 31.02 45.11" y="24.2" font-size="24.2" fill="#000" xml:space="preserve">6404</text></svg>
<svg class="g" style="left:2118px;top:1268.10px" width="127" height="33"><text transform="scale(0.8700,1)" x="2.87 20.54 37.24 52.34 68.29 81.78 95.56 101.60 115.53 128.50" y="24.2" font-size="24.2" fill="#000" xml:space="preserve">DPTBoolean</text></svg>
<svg class="g" style="left:2378px;top:1268.10px" width="56" height="33"><text transform="scale(0.8700,1)" x="2.87 20.93 37.96" y="24.2" font-size="24.2" fill="#000" xml:space="preserve">NEW</text></svg>
<svg style="left:536px;top:1314px;" width="26" height="26" viewBox="0 0 26 26"><rect x="1" y="1" width="24" height="24" fill="#fff" stroke="#333" stroke-width="2"/><path d="M4.500 12.800L9.800 18.400L22 6.600" fill="none" stroke="#606060" stroke-width="2.2"/></svg>
<svg class="g" style="left:603px;top:1312.10px" width="443" height="33"><text transform="scale(0.8700,1)" x="2.41 20.70 34.46 41.73 56.94 65.23 83.00 96.59 109.88 117.36 131.63 140.96 157.33 164.36 178.11 184.82 197.79 212.05 220.58 238.87 252.25 260.24 274.02 288.06 302.32 309.65 327.42 341.01 354.30 362.51 369.50 388.61 402.87 416.20 429.50 436.71 453.08 460.10 473.86 480.56 493.53" y="24.2" font-size="24.2" fill="#000" xml:space="preserve">Gate/Doors\Status\Garage Door Open Status</text></svg>
<svg class="g" style="left:1718px;top:1312.10px" width="54" height="33"><text transform="scale(0.8700,1)" x="2.99 16.78 30.57 44.37" y="24.2" font-size="24.2" fill="#000" xml:space="preserve">6656</text></svg>
<svg class="g" style="left:2118px;top:1312.10px" width="127" height="33"><text transform="scale(0.8700,1)" x="2.87 20.54 37.24 52.34 68.29 81.78 95.56 101.60 115.53 128.50" y="24.2" font-size="24.2" fill="#000" xml:space="preserve">DPTBoolean</text></svg>
<svg class="g" style="left:2378px;top:1312.10px" width="56" height="33"><text transform="scale(0.8700,1)" x="2.87 20.93 37.96" y="24.2" font-size="24.2" fill="#000" xml:space="preserve">NEW</text></svg>
<svg style="left:536px;top:1358px;" width="26" height="26" viewBox="0 0 26 26"><rect x="1" y="1" width="24" height="24" fill="#fff" stroke="#333" stroke-width="2"/><path d="M4.500 12.800L9.800 18.400L22 6.600" fill="none" stroke="#606060" stroke-width="2.2"/></svg>
<svg class="g" style="left:603px;top:1356.10px" width="455" height="33"><text transform="scale(0.8700,1)" x="2.41 20.67 34.41 41.67 56.85 65.11 82.86 96.42 109.69 117.16 131.41 140.71 157.07 164.07 177.81 184.49 197.44 211.69 220.19 238.45 251.81 259.78 273.54 287.55 301.79 309.10 326.84 340.41 353.68 361.87 367.78 384.39 390.15 403.32 415.47 429.40 443.30 450.48 466.84 473.84 487.58 494.26 507.21" y="24.2" font-size="24.2" fill="#000" xml:space="preserve">Gate/Doors\Status\Garage Door Closed Status</text></svg>
<svg class="g" style="left:1718px;top:1356.10px" width="54" height="33"><text transform="scale(0.8700,1)" x="2.99 16.78 30.57 44.37" y="24.2" font-size="24.2" fill="#000" xml:space="preserve">6657</text></svg>
<svg class="g" style="left:2118px;top:1356.10px" width="127" height="33"><text transform="scale(0.8700,1)" x="2.87 20.54 37.24 52.34 68.29 81.78 95.56 101.60 115.53 128.50" y="24.2" font-size="24.2" fill="#000" xml:space="preserve">DPTBoolean</text></svg>
<svg class="g" style="left:2378px;top:1356.10px" width="56" height="33"><text transform="scale(0.8700,1)" x="2.87 20.93 37.96" y="24.2" font-size="24.2" fill="#000" xml:space="preserve">NEW</text></svg>
<svg style="left:536px;top:1402px;" width="26" height="26" viewBox="0 0 26 26"><rect x="1" y="1" width="24" height="24" fill="#fff" stroke="#333" stroke-width="2"/><path d="M4.500 12.800L9.800 18.400L22 6.600" fill="none" stroke="#606060" stroke-width="2.2"/></svg>
<svg class="g" style="left:603px;top:1400.10px" width="465" height="33"><text transform="scale(0.8700,1)" x="2.41 20.71 34.48 41.76 56.98 65.27 83.05 96.66 109.95 117.45 131.72 141.06 157.45 164.48 178.24 184.95 197.93 212.21 220.75 239.04 252.44 260.43 274.23 288.27 302.54 309.88 327.66 341.27 354.56 362.78 369.99 386.31 399.51 410.94 416.12 422.64 427.75 440.74 454.05 461.26 477.65 484.68 498.44 505.15 518.13" y="24.2" font-size="24.2" fill="#000" xml:space="preserve">Gate/Doors\Status\Garage Door Position Status</text></svg>
<svg class="g" style="left:1718px;top:1400.10px" width="54" height="33"><text transform="scale(0.8700,1)" x="2.99 16.78 30.57 44.62" y="24.2" font-size="24.2" fill="#000" xml:space="preserve">6658</text></svg>
<svg class="g" style="left:2118px;top:1400.10px" width="229" height="33"><text transform="scale(0.8700,1)" x="2.87 20.74 37.63 53.44 67.19 82.90 88.10 96.37 114.73 127.35 138.80 144.04 157.17 170.55 184.55 197.14 212.49 226.49 232.08 245.86" y="24.2" font-size="24.2" fill="#000" xml:space="preserve">DPT8BitUnsignedValue</text></svg>
<svg class="g" style="left:2378px;top:1400.10px" width="56" height="33"><text transform="scale(0.8700,1)" x="2.87 20.93 37.96" y="24.2" font-size="24.2" fill="#000" xml:space="preserve">NEW</text></svg>
<div style="left:478px;top:1436px;width:2152px;height:112px;background:#f0f0f0;"></div>
<div style="left:2578px;top:324px;width:30px;height:1112px;background:#f0f0f0;"></div>
<div style="left:2578px;top:356px;width:30px;height:894px;background:#cdcdcd;"></div>
<svg style="left:2584px;top:332px;" width="18" height="14" viewBox="0 0 18 14"><path d="M2.500 12L9 4.500L15.500 12" fill="none" stroke="#606060" stroke-width="3.4"/></svg>
<svg style="left:2584px;top:1413px;" width="18" height="14" viewBox="0 0 18 14"><path d="M2.500 2L9 9.500L15.500 2" fill="none" stroke="#606060" stroke-width="3.4"/></svg>
<svg style="left:506px;top:1466px;" width="26" height="26" viewBox="0 0 26 26"><rect x="1" y="1" width="24" height="24" fill="#fff" stroke="#333" stroke-width="2"/><path d="M4.500 12.800L9.800 18.400L22 6.600" fill="none" stroke="#606060" stroke-width="2.2"/></svg>
<svg class="g" style="left:538px;top:1462.40px" width="99" height="33"><text transform="scale(0.8700,1)" x="2.53 19.18 33.38 39.50 54.28 67.42 74.66 81.54 97.78 103.82" y="24.2" font-size="24.2" fill="#000" xml:space="preserve">Select All</text></svg>
<div style="left:2462px;top:1460px;width:146px;height:66px;background:#e1e1e1;border:2px solid #adadad;box-sizing:border-box;"></div>
<svg class="g" style="left:2510px;top:1476.20px" width="51" height="33"><text transform="scale(0.8700,1)" x="2.53 20.86 35.46 48.44" y="24.2" font-size="24.2" fill="#000" xml:space="preserve">Next</text></svg>
<div style="left:2622px;top:1528px;width:4px;height:4px;background:#bfbfbf;"></div>
<div style="left:2616px;top:1534px;width:4px;height:4px;background:#bfbfbf;"></div>
<div style="left:2622px;top:1534px;width:4px;height:4px;background:#bfbfbf;"></div>
<div style="left:2610px;top:1540px;width:4px;height:4px;background:#bfbfbf;"></div>
<div style="left:2616px;top:1540px;width:4px;height:4px;background:#bfbfbf;"></div>
<div style="left:2622px;top:1540px;width:4px;height:4px;background:#bfbfbf;"></div>
<div style="left:0px;top:1672px;width:2880px;height:48px;background:#f4f4f4;"></div>
<svg style="left:6px;top:1680px;" width="36" height="36" viewBox="0 0 36 36"><circle cx="18" cy="18" r="15.500" fill="none" stroke="#9dbfe6" stroke-width="1.8"/><circle cx="18" cy="9.500" r="2.2" fill="none" stroke="#9dbfe6" stroke-width="1.4"/><rect x="15.800" y="13.500" width="4.400" height="13" rx="2" fill="none" stroke="#9dbfe6" stroke-width="1.4"/></svg>
<span class="t" style="left:48.30px;top:1684.64px;font-size:25px;line-height:25px;color:#000;transform:scaleX(1.0074);">Admin </span>
<span class="t" style="left:125.30px;top:1684.64px;font-size:25px;line-height:25px;color:#000;transform:scaleX(0.7050);">: </span>
<span class="t" style="left:139.40px;top:1684.64px;font-size:25px;line-height:25px;color:#000;transform:scaleX(0.9153);">1/14/2022 </span>
<span class="t" style="left:247.90px;top:1684.64px;font-size:25px;line-height:25px;color:#000;transform:scaleX(0.8669);">7:50:47 </span>
<span class="t" style="left:326.80px;top:1684.64px;font-size:25px;line-height:25px;color:#000;transform:scaleX(0.9360);">PM </span>
<span class="t" style="left:367.40px;top:1684.64px;font-size:25px;line-height:25px;color:#000;transform:scaleX(0.7050);">: </span>
<span class="t" style="left:380.50px;top:1684.64px;font-size:25px;line-height:25px;color:#000;transform:scaleX(0.8546);">User </span>
<span class="t" style="left:432.10px;top:1684.64px;font-size:25px;line-height:25px;color:#000;transform:scaleX(0.6906);">: </span>
<span class="t" style="left:445.30px;top:1684.64px;font-size:25px;line-height:25px;color:#000;transform:scaleX(0.9049);">Delete </span>
<span class="t" style="left:515.40px;top:1684.64px;font-size:25px;line-height:25px;color:#000;transform:scaleX(0.6906);">: </span>
<span class="t" style="left:529.50px;top:1684.64px;font-size:25px;line-height:25px;color:#000;transform:scaleX(0.8668);">Path: </span>
<span class="t" style="left:589.30px;top:1684.64px;font-size:25px;line-height:25px;color:#000;transform:scaleX(0.9473);">Devices\KNX\Heating</span>
<div style="left:0px;top:1720px;width:2880px;height:80px;background:linear-gradient(90deg,#273841 0,#263741 1300px,#212c41 2100px,#1f2840 2880px);"></div>
<div style="left:96px;top:1720px;width:687px;height:80px;background:#f2f2f2;border:2px solid #c0c0c0;box-sizing:border-box;"></div>
<svg style="left:31.8px;top:1743.7px;" width="32.4" height="32.4" viewBox="0 0 34 34"><g fill="#fff"><path d="M0 4.800L14.300 2.800V16.300H0Z"/><path d="M15.600 2.600L34 0V16.300H15.600Z"/><path d="M0 17.600H14.300V31.200L0 29.200Z"/><path d="M15.600 17.600H34V34L15.600 31.400Z"/></g></svg>
<svg style="left:118px;top:1742px;" width="36" height="36" viewBox="0 0 36 36"><circle cx="23" cy="13" r="10" fill="none" stroke="#111" stroke-width="2.100"/><path d="M15.800 20.200L2.800 33.200" stroke="#111" stroke-width="2.200" fill="none"/></svg>
<span class="t" style="left:176.20px;top:1746.96px;font-size:31px;line-height:31px;color:#1b1b1b;transform:scaleX(0.9391);">Type here to search</span>
<svg style="left:814px;top:1742px;" width="36" height="36" viewBox="0 0 36 36"><circle cx="18" cy="18" r="13.600" fill="none" stroke="#fff" stroke-width="3.400"/><circle cx="18" cy="18" r="15.600" fill="none" stroke="#9aa" stroke-width="1" opacity=".6"/></svg>
<svg style="left:910px;top:1743px;" width="36" height="34" viewBox="0 0 36 34"><g fill="none" stroke="#fff" stroke-width="2.400"><rect x="3" y="10" width="19" height="13"/><path d="M3 7V2.500H22V7M3 26V30.500H22V26M30 2V8M30 16V32"/></g><circle cx="30" cy="12" r="3" fill="#fff"/></svg>
<svg style="left:1008px;top:1742px;" width="44" height="36" viewBox="0 0 44 36"><path d="M0 4a2 2 0 0 1 2-2H13l4 3.500H42a2 2 0 0 1 2 2V9H0Z" fill="#dca53a"/><rect x="0" y="5.500" width="44" height="27.500" rx="1.500" fill="#f8d36e"/><path d="M7 34V20.500a2 2 0 0 1 2-2H35a2 2 0 0 1 2 2V34H30V26H14V34Z" fill="#4a90d9"/><rect x="0" y="30.500" width="7" height="2.500" fill="#eabf50"/><rect x="14" y="26" width="16" height="7" fill="#f2c94e"/></svg>
<div style="left:990px;top:1796px;width:80px;height:4px;background:#84b9e8;"></div>
<svg style="left:1105px;top:1737px;" width="46" height="46" viewBox="0 0 46 46"><circle cx="23" cy="23" r="22.300" fill="#dd5144"/><path d="M23 23L3.700 11.850A22.300 22.300 0 0 0 23 45.300L32.650 28.570Z" fill="#4aa467" transform="rotate(0 23 23)"/><path d="M23 23h22.300A22.300 22.300 0 0 1 23 45.300L34.150 26Z" fill="#f7ce47"/><path d="M3.700 11.850A22.300 22.300 0 0 1 42.300 11.850H23Z" fill="#dd5144"/><path d="M42.300 11.850A22.300 22.300 0 0 1 23 45.300L32.600 28.600Q35 23 32.600 17.400L23 11.850Z" fill="#f7ce47"/><circle cx="23" cy="23" r="10.800" fill="#fff"/><circle cx="23" cy="23" r="8.600" fill="#5a8ef0"/></svg>
<div style="left:1178px;top:1720px;width:96px;height:80px;background:#4f5f69;"></div>
<div style="left:1178px;top:1796px;width:96px;height:4px;background:#84b9e8;"></div>
<svg style="left:1202px;top:1736px;" width="48" height="48" viewBox="0 0 48 48"><rect x="0" y="0" width="48" height="48" rx="4" fill="#e0863b"/><rect x="21.10" y="8.34" width="5.80" height="7.25" rx="0.5" fill="#fff" transform="rotate(22.5 24 24)"/><rect x="21.10" y="8.34" width="5.80" height="7.25" rx="0.5" fill="#fff" transform="rotate(67.5 24 24)"/><rect x="21.10" y="8.34" width="5.80" height="7.25" rx="0.5" fill="#fff" transform="rotate(112.5 24 24)"/><rect x="21.10" y="8.34" width="5.80" height="7.25" rx="0.5" fill="#fff" transform="rotate(157.5 24 24)"/><rect x="21.10" y="8.34" width="5.80" height="7.25" rx="0.5" fill="#fff" transform="rotate(202.5 24 24)"/><rect x="21.10" y="8.34" width="5.80" height="7.25" rx="0.5" fill="#fff" transform="rotate(247.5 24 24)"/><rect x="21.10" y="8.34" width="5.80" height="7.25" rx="0.5" fill="#fff" transform="rotate(292.5 24 24)"/><rect x="21.10" y="8.34" width="5.80" height="7.25" rx="0.5" fill="#fff" transform="rotate(337.5 24 24)"/><circle cx="24" cy="24" r="12.62" fill="#fff"/><circle cx="24" cy="24" r="7.47" fill="#e0863b"/><circle cx="24" cy="24" r="3.92" fill="#fff"/></svg>
<svg style="left:2156px;top:1742px;" width="46" height="33" viewBox="0 0 46 33"><defs><linearGradient id="cl" x1="0" y1="0" x2=".4" y2="1"><stop offset="0" stop-color="#eef7ff"/><stop offset=".55" stop-color="#c9e4f8"/><stop offset="1" stop-color="#a5cbea"/></linearGradient></defs><path d="M27 5.500a9 9 0 0 1 15.500 4a8 8 0 0 1 1 11L30 22Z" fill="#5b8fd0"/><path d="M10.500 31.500a9 9 0 0 1-2.500-17.500A12.500 12.500 0 0 1 31.500 10.500a10.500 10.500 0 0 1 3 21Z" fill="url(#cl)"/></svg>
<span class="t" style="left:2219.30px;top:1746.98px;font-size:30.5px;line-height:30.5px;color:#fff;transform:scaleX(0.8370);">24°F</span>
<span class="t" style="left:2290.30px;top:1746.98px;font-size:30.5px;line-height:30.5px;color:#fff;transform:scaleX(0.9026);">Cloudy</span>
<svg style="left:2408px;top:1750px;" width="30" height="20" viewBox="0 0 30 20"><path d="M2.500 17L15 4.500L27.500 17" fill="none" stroke="#fff" stroke-width="2.2"/></svg>
<svg style="left:2458px;top:1743px;" width="30" height="36" viewBox="0 0 30 36"><g fill="none" stroke="#fff" stroke-width="1.800"><rect x="3.500" y="11" width="15" height="14" rx="3"/><path d="M18.500 16L25 12V24L18.500 20"/><path d="M5 6.500C9 2.500 17 2.500 21 6.500M5 29.500C9 33.500 17 33.500 21 29.500"/></g></svg>
<svg style="left:2502px;top:1746px;" width="36" height="28" viewBox="0 0 36 28"><g fill="none" stroke="#fff" stroke-width="1.800"><path d="M10 8H31.500V23H8V19"/><path d="M31.500 12H34.500V19H31.500"/><path d="M3 2V7M8 2V7M1.500 7H9.500V11.500C9.500 14 7.500 15.500 5.500 15.500C3.500 15.500 1.500 14 1.500 11.500ZM5.500 15.500V22"/></g><path d="M12 12H23L21 21H10Z" fill="#fff"/></svg>
<svg style="left:2549px;top:1744px;" width="36" height="32" viewBox="0 0 36 32"><g fill="none" stroke="#fff" stroke-width="1.800"><path d="M2 11.500H7.500L14 5V27L7.500 20.500H2Z"/><path d="M18.500 11.500C20.500 14 20.500 18 18.500 20.500"/><path d="M23 7.500C27 12 27 20 23 24.500"/><path d="M27.500 3.500C33.500 10 33.500 22 27.500 28.500"/></g></svg>
<svg style="left:2597px;top:1742px;" width="38" height="38" viewBox="0 0 38 38"><g fill="none" stroke="#fff" stroke-width="1.800"><path d="M3 9L33.500 3.500V26M3 9V29.500L18 32"/><path d="M11.500 19.500a5.500 5.500 0 0 1 10-3M21.500 12.500V16.500H17.500M21.500 20.500a5.500 5.500 0 0 1-10 3M11.500 27.500V23.500H15.500"/></g><circle cx="27" cy="27" r="7.200" fill="#f29a2e"/></svg>
<span class="t" style="left:2663.60px;top:1730.98px;font-size:24px;line-height:24px;color:#fff;transform:scaleX(0.9421);">8:16 PM</span>
<span class="t" style="left:2654.00px;top:1768.08px;font-size:24px;line-height:24px;color:#fff;transform:scaleX(0.9946);">1/14/2022</span>
<svg style="left:2796px;top:1741px;" width="52" height="50" viewBox="0 0 52 50"><path d="M2.300 3H33.800V29H14L9 29V29H2.300Z" fill="#fff"/><path d="M11 29L17 35V29Z" fill="#fff"/><g stroke="#18223c" stroke-width="1.900"><path d="M8 10.200H28M8 16H28M8 21.800H28"/></g><circle cx="31.900" cy="33" r="16" fill="#2b2f3b" stroke="#8b8f98" stroke-width="1.400"/><path d="M31.900 33L17.500 40A16 16 0 0 1 33.800 17.100V29Z" fill="#7d8088" opacity=".85"/><text x="31.900" y="41.600" text-anchor="middle" font-family="Liberation Sans, sans-serif" font-weight="bold" font-size="24" fill="#fff">2</text></svg>
<div style="left:2870px;top:1720px;width:2px;height:80px;background:#858a98;"></div>
</body></html>
